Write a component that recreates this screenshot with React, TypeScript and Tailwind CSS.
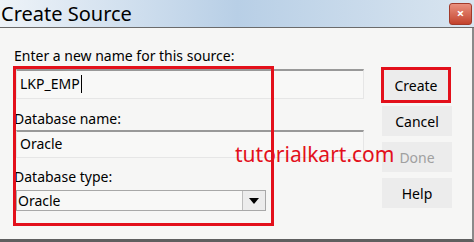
export default function App() {
  const font = { fontFamily: '"Noto Sans", "Open Sans", sans-serif' };
  return (
    <div
      className="relative w-[474px] h-[242px] flex flex-col overflow-hidden bg-[#f6f6f5] text-black"
      style={font}
    >
      {/* title bar */}
      <div className="h-[28px] flex items-center justify-between bg-gradient-to-r from-[#eef3f8] via-[#b8cfe6] to-[#d9e5f0] border-b border-[#6b6b6b]">
        <span className="text-[20px] leading-[26px] pl-[1px]">Create Source</span>
        <div className="w-[23px] h-[22px] mr-[2px] rounded-[3px] bg-gradient-to-b from-[#e9907e] to-[#c3422c] border border-[#a23a2a] flex items-center justify-center text-white text-[13px] font-bold leading-none">
          ×
        </div>
      </div>

      {/* body */}
      <div className="flex-1 flex border-r-[2px] border-r-[#8a8a8a] border-b-[3px] border-b-[#5f5f5f]">
        <div className="w-[382px] flex flex-col pt-[18px] pl-[14px] text-[14px] leading-[20px]">
          <span>Enter a new name for this source:</span>
          <div className="mt-[3px] ml-[2px] w-[348px] h-[30px] border-t-2 border-t-[#999] border-x border-b border-[#e6e6e6] bg-[#f8f8f7] flex items-center pl-[3px] pb-[2px]">
            LKP_EMP<span className="w-px h-[18px] bg-black ml-[1px]" />
          </div>
          <span className="mt-[10px]">Database name:</span>
          <div className="mt-[1px] ml-[2px] w-[348px] h-[28px] border-t-2 border-t-[#999] border-x border-b border-[#e6e6e6] bg-[#f8f8f7] flex items-center pl-[3px] pb-[2px]">
            Oracle
          </div>
          <span className="mt-[9px]">Database type:</span>
          <div className="mt-[3px] ml-[2px] w-[250px] h-[21px] flex border border-[#a8a8a8] bg-[#f8f8f7]">
            <div className="flex-1 flex items-center pl-[1px]">Oracle</div>
            <div className="w-[23px] border-l border-[#bdbdbd] bg-[#ececec] flex items-center justify-center">
              <svg width="10" height="6" viewBox="0 0 10 6">
                <path d="M0 0h10L5 6z" fill="#000" />
              </svg>
            </div>
          </div>
        </div>

        <div className="flex flex-col pt-[42px] gap-[6px] text-[14px]">
          <div className="w-[68px] h-[30px] bg-[#ececec] flex items-center justify-center">Create</div>
          <div className="w-[70px] h-[30px] bg-[#ececec] flex items-center justify-center">Cancel</div>
          <div className="w-[70px] h-[30px] bg-[#ececec] flex items-center justify-center text-[#a0a0a0]">Done</div>
          <div className="w-[70px] h-[30px] bg-[#ececec] flex items-center justify-center">Help</div>
        </div>
      </div>

      {/* annotations */}
      <div className="absolute left-[13px] top-[66px] w-[261px] h-[160px] border-[3px] border-[#e3101b] pointer-events-none" />
      <div className="absolute left-[381px] top-[67px] w-[70px] h-[36px] border-[3px] border-[#e3101b] pointer-events-none" />
      <div className="absolute left-[235px] top-[139px] text-[21px] leading-[30px] text-[#e3101b]">
        tutorialkart.com
      </div>
    </div>
  );
}
